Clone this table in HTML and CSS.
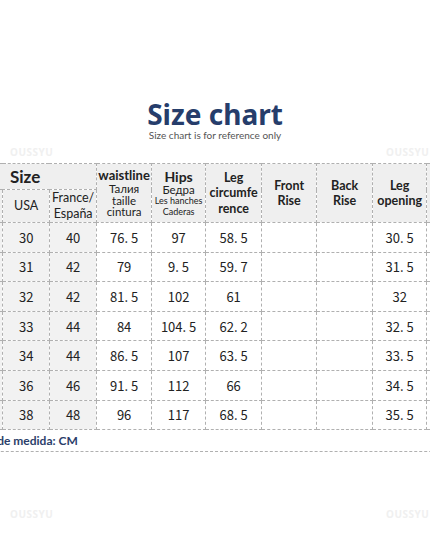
FILE: index.html
```html
<!DOCTYPE html>
<html lang="en">
<head>
    <meta charset="UTF-8">
    <meta name="viewport" content="width=device-width, initial-scale=1.0">
    <title>Size chart</title>
    <link rel="stylesheet" href="styles.css">
</head>
<body>

    <!-- Watermarks -->
    <div class="mark mark-tl">OUSSYU</div>
    <div class="mark mark-tr">OUSSYU</div>
    <div class="mark mark-bl">OUSSYU</div>
    <div class="mark mark-br">OUSSYU</div>

    <div class="heading">
        <h1>Size chart</h1>
        <p>Size chart is for reference only</p>
    </div>

    <div class="chart">
        <table class="size-table">
            <colgroup>
                <col class="c-tag">
                <col class="c-usa">
                <col class="c-fr">
                <col class="c-m">
                <col class="c-m">
                <col class="c-w">
                <col class="c-w">
                <col class="c-w">
                <col class="c-m">
                <col class="c-m">
            </colgroup>
            <thead>
                <tr class="head-1">
                    <th colspan="3" class="size-title">Size</th>
                    <th rowspan="2">
                        <span class="main">waistline</span>
                        <span class="sub">Талия<br>taille<br>cintura</span>
                    </th>
                    <th rowspan="2">
                        <span class="main hips">Hips</span>
                        <span class="sub">Бедра</span>
                        <span class="tiny">Les hanches<br>Caderas</span>
                    </th>
                    <th rowspan="2" class="bold-head">Leg<br>circumfe<br>rence</th>
                    <th rowspan="2" class="bold-head">Front<br>Rise</th>
                    <th rowspan="2" class="bold-head">Back<br>Rise</th>
                    <th rowspan="2" class="bold-head">Leg<br>opening</th>
                    <th rowspan="2" class="bold-head">Leg<br>length</th>
                </tr>
                <tr class="head-2">
                    <th class="plain">Tag</th>
                    <th class="plain">USA</th>
                    <th class="plain">France/<br>España</th>
                </tr>
            </thead>
            <tbody>
                <tr><td class="grey">S</td><td class="grey">30</td><td class="grey">40</td><td>76. 5</td><td>97</td><td>58. 5</td><td></td><td></td><td>30. 5</td><td>101</td></tr>
                <tr><td class="grey">M</td><td class="grey">31</td><td class="grey">42</td><td>79</td><td>9. 5</td><td>59. 7</td><td></td><td></td><td>31. 5</td><td>102</td></tr>
                <tr><td class="grey">L</td><td class="grey">32</td><td class="grey">42</td><td>81. 5</td><td>102</td><td>61</td><td></td><td></td><td>32</td><td>103</td></tr>
                <tr><td class="grey">XL</td><td class="grey">33</td><td class="grey">44</td><td>84</td><td>104. 5</td><td>62. 2</td><td></td><td></td><td>32. 5</td><td>104</td></tr>
                <tr><td class="grey">XXL</td><td class="grey">34</td><td class="grey">44</td><td>86. 5</td><td>107</td><td>63. 5</td><td></td><td></td><td>33. 5</td><td>105</td></tr>
                <tr><td class="grey">3XL</td><td class="grey">36</td><td class="grey">46</td><td>91. 5</td><td>112</td><td>66</td><td></td><td></td><td>34. 5</td><td>106</td></tr>
                <tr><td class="grey">4XL</td><td class="grey">38</td><td class="grey">48</td><td>96</td><td>117</td><td>68. 5</td><td></td><td></td><td>35. 5</td><td>107</td></tr>
            </tbody>
        </table>
        <p class="unit">Unidad de medida: CM</p>
    </div>

</body>
</html>
```

FILE: styles.css
```css
body {
    margin: 0;
    background-color: #ffffff;
    font-family: Lato, "Noto Sans", sans-serif;
    color: #222222;
    width: 430px;
    height: 537px;
    overflow: hidden;
    position: relative;
}

/* Watermarks */
.mark {
    position: absolute;
    font-family: "Noto Sans", sans-serif;
    font-size: 10px;
    font-weight: bold;
    letter-spacing: 0.5px;
    color: #f0f0f0;
}

.mark-tl { left: 10px; top: 145px; }
.mark-tr { left: 386px; top: 145px; }
.mark-bl { left: 10px; top: 507px; }
.mark-br { left: 386px; top: 507px; }

/* Title */
.heading {
    padding-top: 99px;
    text-align: center;
}

.heading h1 {
    margin: 0;
    font-family: "Noto Sans", sans-serif;
    font-size: 28px;
    line-height: 30px;
    font-weight: bold;
    color: #263d6b;
}

.heading p {
    margin: 0;
    font-size: 10px;
    line-height: 12px;
    color: #555555;
}

/* Table */
.chart {
    margin-top: 22px;
    margin-left: -49px;
    width: 531px;
}

.size-table {
    border-collapse: collapse;
    table-layout: fixed;
    width: 531px;
}

.c-tag { width: 51px; }
.c-usa { width: 46px; }
.c-fr { width: 47px; }
.c-m { width: 54px; }
.c-w { width: 55px; }

.size-table th,
.size-table td {
    border: 1px dashed #b0b0b0;
    padding: 0;
    text-align: center;
    vertical-align: middle;
    overflow: hidden;
    white-space: nowrap;
}

.size-table thead th {
    background-color: #efefef;
    font-weight: normal;
}

.head-1 { height: 26px; }
.head-2 { height: 33px; }

.size-table .size-title {
    font-size: 17px;
    line-height: 20px;
    font-weight: bold;
    text-align: left;
    padding-left: 58px;
}

.size-table .plain {
    font-size: 12.5px;
    line-height: 16px;
}

.size-table .bold-head {
    font-size: 12.5px;
    line-height: 15.5px;
    font-weight: bold;
}

.main {
    display: block;
    font-size: 13px;
    line-height: 15px;
    font-weight: bold;
}

.main.hips {
    font-size: 14px;
}

.sub {
    display: block;
    font-size: 11.5px;
    line-height: 11.5px;
}

.tiny {
    display: block;
    font-size: 9px;
    line-height: 11px;
}

.size-table tbody tr {
    height: 29.6px;
}

.size-table td {
    font-family: "Noto Sans CJK SC", sans-serif;
    font-size: 13px;
}

.size-table td.grey {
    background-color: #f2f2f2;
}

/* Unit note */
.unit {
    margin: 0;
    height: 21px;
    line-height: 21px;
    border-bottom: 1px dashed #b0b0b0;
    font-size: 12px;
    font-weight: bold;
    color: #2b3e6a;
    padding-left: 5px;
}
```
